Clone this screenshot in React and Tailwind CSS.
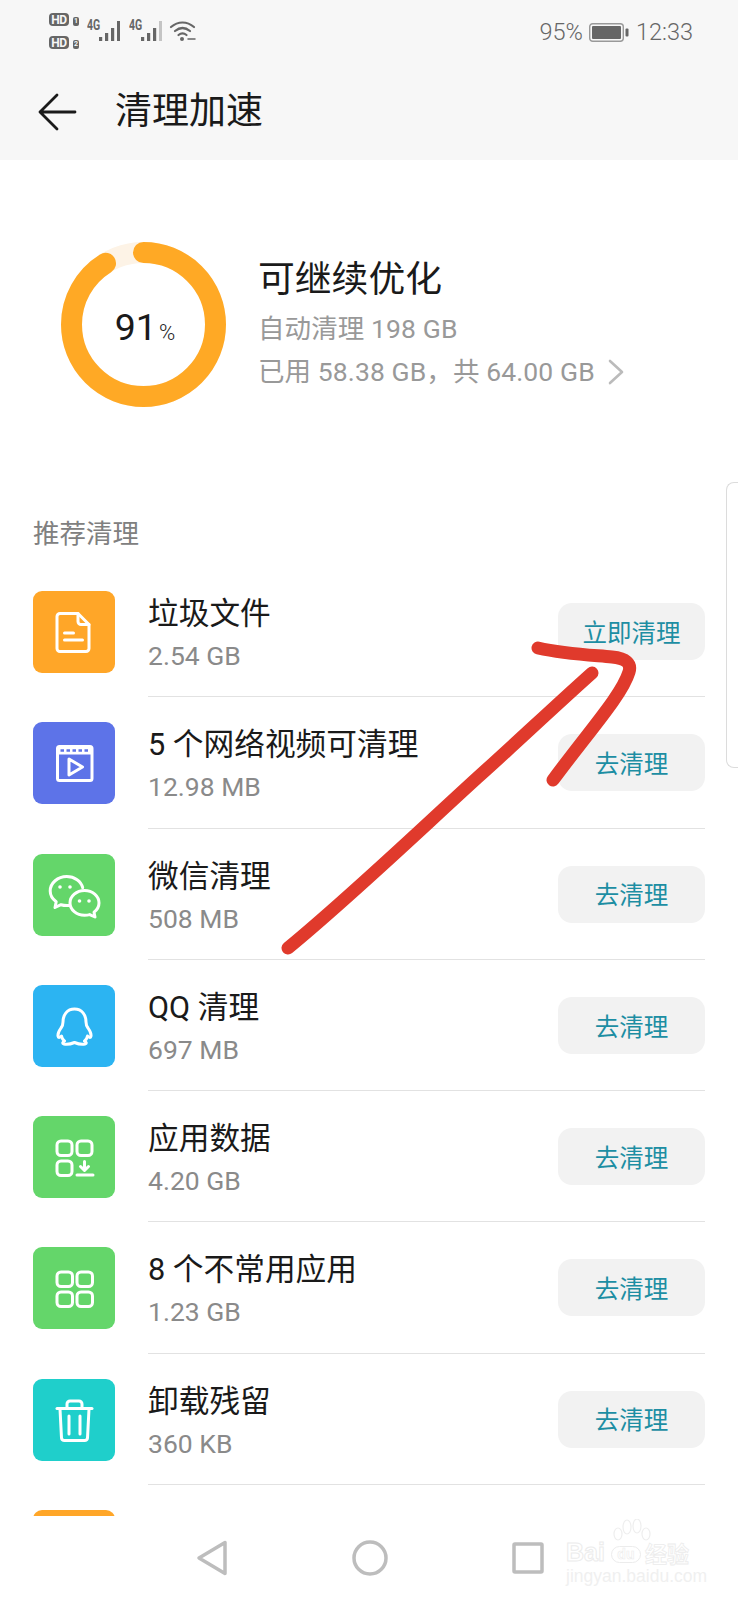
const rows = [
  { title: "垃圾文件", size: "2.54 GB", color: "bg-[#ffa628]", icon: "file", action: "立即清理" },
  { title: "5 个网络视频可清理", size: "12.98 MB", color: "bg-[#5d73e8]", icon: "video" },
  { title: "微信清理", size: "508 MB", color: "bg-[#64d66a]", icon: "wechat" },
  { title: "QQ 清理", size: "697 MB", color: "bg-[#2cb4f2]", icon: "qq" },
  { title: "应用数据", size: "4.20 GB", color: "bg-[#64d66a]", icon: "appdata" },
  { title: "8 个不常用应用", size: "1.23 GB", color: "bg-[#64d66a]", icon: "apps" },
  { title: "卸载残留", size: "360 KB", color: "bg-[#1fcfcb]", icon: "trash" },
];

function TileIcon({ name }) {
  const common = {
    width: 82,
    height: 82,
    viewBox: "0 0 82 82",
    fill: "none",
    stroke: "#fff",
    strokeWidth: 3,
    strokeLinecap: "round",
    strokeLinejoin: "round",
  };
  if (name === "file") {
    return (
      <svg {...common}>
        <path d="M27 22.500h18l11 11v24a3 3 0 0 1-3 3H27a3 3 0 0 1-3-3v-32a3 3 0 0 1 3-3z" />
        <path d="M45 22.500v8a3 3 0 0 0 3 3h8" />
        <path d="M31.500 42h9M31.500 49h18" />
      </svg>
    );
  }
  if (name === "video") {
    return (
      <svg {...common}>
        <rect x="24.500" y="24.500" width="34.500" height="34" rx="2" />
        <path d="M24.500 29h34.500" strokeWidth="7" strokeLinecap="butt" />
        <path d="M27.500 28.500h29" stroke="#5d73e8" strokeWidth="2.400" strokeDasharray="3.500 2.500" strokeLinecap="butt" />
        <path d="M36 37l13.500 8L36 53z" />
      </svg>
    );
  }
  if (name === "wechat") {
    return (
      <svg {...common}>
        <path d="M36 51.500c-3 .2-5.500 0-8-.8l-6 2.800 1.200-5.800c-3.800-2.700-6-6.600-6-10.700 0-8 7.600-14.500 16.500-14.500 7.800 0 14.500 4.700 16 11.200" />
        <path d="M51.500 36.500c8 0 14.500 5.600 14.500 12.500 0 3.700-1.900 6.900-5 9.200l1 4.800-5.300-2.400c-1.600.5-3.400.7-5.200.7-8 0-14.500-5.600-14.500-12.300s6.500-12.500 14.500-12.500z" />
        <circle cx="27" cy="33" r="1.800" fill="#fff" stroke="none" />
        <circle cx="37" cy="33" r="1.800" fill="#fff" stroke="none" />
        <circle cx="46.500" cy="47" r="1.800" fill="#fff" stroke="none" />
        <circle cx="56" cy="47" r="1.800" fill="#fff" stroke="none" />
      </svg>
    );
  }
  if (name === "qq") {
    return (
      <svg {...common}>
        <path d="M41.500 24c-7.500 0-11.500 6-11.500 13 0 2.500-.5 4-2 6-2 2.800-3.300 5.500-3 8 .2 1.700 1.500 2 3.500 0 .5 2.500 1.500 4 3 5-2 1-2.500 2.600-.5 3.100 3.200.7 7-.1 10.500-1.600 3.500 1.500 7.300 2.300 10.500 1.600 2-.5 1.500-2.100-.5-3.100 1.500-1 2.500-2.500 3-5 2 2 3.300 1.700 3.500 0 .3-2.500-1-5.200-3-8-1.500-2-2-3.500-2-6 0-7-4-13-11.500-13z" />
      </svg>
    );
  }
  if (name === "appdata") {
    return (
      <svg {...common}>
        <rect x="24" y="25" width="15" height="14.500" rx="4" />
        <rect x="44" y="25" width="15" height="14.500" rx="4" />
        <rect x="24" y="45" width="15" height="14.500" rx="4" />
        <path d="M51.500 45.500v8M47.500 50.500l4 4 4-4" />
        <path d="M44 59h16" />
      </svg>
    );
  }
  if (name === "apps") {
    return (
      <svg {...common}>
        <rect x="24" y="25" width="15.500" height="14.500" rx="4" />
        <rect x="44" y="25" width="15.500" height="14.500" rx="4" />
        <rect x="24" y="45" width="15.500" height="14.500" rx="4" />
        <rect x="44" y="45" width="15.500" height="14.500" rx="4" />
      </svg>
    );
  }
  return (
    <svg {...common}>
      <path d="M24 29.500h35" />
      <path d="M34 29v-4a3 3 0 0 1 3-3h9a3 3 0 0 1 3 3v4" />
      <path d="M27 30l1.500 29a3 3 0 0 0 3 2.500h20a3 3 0 0 0 3-2.500L56 30" />
      <path d="M36 37v18M47 37v18" />
    </svg>
  );
}

function Bars({ dim }) {
  const heights = [4, 8, 13, 20];
  return (
    <svg width="22" height="21" viewBox="0 0 22 21">
      {heights.map((h, i) => (
        <rect
          key={i}
          x={i * 6 + 1}
          y={21 - h}
          width="3.200"
          height={h}
          fill={dim && i === 3 ? "#c4c4c4" : "#666"}
        />
      ))}
    </svg>
  );
}

function HdBadge({ n }) {
  return (
    <div className="flex items-end gap-[4px]">
      <span className="flex h-[13px] w-[20px] items-center justify-center rounded-[4px] bg-[#666] text-[12px] leading-none font-bold tracking-[-0.500px] text-[#f7f7f7]">
        HD
      </span>
      <span className="flex h-[9px] w-[6px] items-center justify-center rounded-[2px] bg-[#666] text-[7px] leading-none font-bold text-[#f7f7f7]">
        {n}
      </span>
    </div>
  );
}

function StatusBar() {
  return (
    <div className="flex h-[64px] items-start justify-between pr-[45px] pl-[49px]">
      <div className="flex pt-[13px]">
        <div className="flex w-[38px] flex-col gap-[10px]">
          <HdBadge n="1" />
          <HdBadge n="2" />
        </div>
        {[false, true].map((dim, i) => (
          <div key={i} className="mt-[7px] flex w-[42px] items-start">
            <span className="w-[11px] origin-left scale-x-75 text-[14px] leading-[11px] font-bold whitespace-nowrap text-[#666]">4G</span>
            <Bars dim={dim} />
          </div>
        ))}
        <svg className="mt-[7px] -ml-[2px]" width="27" height="22" viewBox="0 0 27 22" fill="none" stroke="#666" strokeWidth="2.200" strokeLinecap="round">
          <path d="M2 7c7-6 16-6 23 0" />
          <path d="M6 11c5-4 10-4 15 0" />
          <path d="M9.500 15c3-2.500 5-2.500 8 0" />
          <circle cx="13" cy="19" r="2" fill="#666" stroke="none" />
          <path d="M19 19h7" strokeWidth="1.500" />
        </svg>
      </div>
      <div className="flex items-center pt-[18px] text-[23.500px] leading-[28px] font-light text-[#666]">
        <span>95%</span>
        <svg className="mr-[7px] ml-[6px]" width="40" height="19" viewBox="0 0 40 19">
          <rect x="0.700" y="0.700" width="33.600" height="17.600" rx="3" fill="none" stroke="#999" strokeWidth="1.400" />
          <rect x="3" y="3" width="29" height="13" rx="1" fill="#666" />
          <rect x="36.500" y="5.500" width="3" height="8" rx="1" fill="#666" />
        </svg>
        <span>12:33</span>
      </div>
    </div>
  );
}

function Ring() {
  return (
    <div className="relative h-[165px] w-[165px] shrink-0">
      <svg width="165" height="165" viewBox="0 0 165 165" fill="none" strokeWidth="21">
        <circle cx="82.500" cy="82.500" r="72" stroke="#fdf3e6" />
        <circle
          cx="82.500"
          cy="82.500"
          r="72"
          stroke="#ffa925"
          strokeLinecap="round"
          strokeDasharray="411.700 452.400"
          transform="rotate(-90 82.500 82.500)"
        />
      </svg>
      <div className="absolute inset-0 flex items-baseline justify-center pt-[60px] pl-[3px] text-[#1a1a1a]">
        <span className="text-[37.500px] leading-[50px]">91</span>
        <span className="ml-[2px] text-[22px] leading-[50px] font-light text-[#222]">%</span>
      </div>
    </div>
  );
}

function CleanRow({ row }) {
  return (
    <div className="flex h-[131.300px] shrink-0 px-[33px]">
      <div className={`mt-[25px] h-[82px] w-[82px] shrink-0 rounded-[9px] ${row.color}`}>
        <TileIcon name={row.icon} />
      </div>
      <div className="ml-[33px] flex flex-1 justify-between border-b border-[#e2e2e2]">
        <div className="pt-[30px]">
          <div className="text-[30.700px] leading-[36px] text-[#1a1a1a]">{row.title}</div>
          <div className="mt-[9px] text-[26.500px] leading-[30px] text-[#8a8a8a]">{row.size}</div>
        </div>
        <button
          type="button"
          className="mt-[37px] h-[57px] w-[147px] rounded-[14px] bg-[#f2f2f2] pt-[5px] text-[24.500px] text-[#1d8ea3]"
        >
          {row.action || "去清理"}
        </button>
      </div>
    </div>
  );
}

export default function App() {
  return (
    <div className="relative flex h-[1600px] w-[738px] flex-col overflow-hidden bg-white font-['Roboto','Noto_Sans_CJK_SC',sans-serif]">
      <header className="h-[160px] shrink-0 bg-[#f7f7f7]">
        <StatusBar />
        <div className="flex items-center pt-[24px] pl-[38px]">
          <svg width="39" height="38" viewBox="0 0 39 38" fill="none" stroke="#1a1a1a" strokeWidth="2.800" strokeLinecap="round" strokeLinejoin="round">
            <path d="M37 19H2M19 2L2 19l17 17" />
          </svg>
          <h1 className="ml-[38px] text-[37px] leading-[48px] font-normal text-[#1a1a1a]">清理加速</h1>
        </div>
      </header>

      <section className="flex h-[336px] shrink-0 pt-[82px] pl-[61px]">
        <Ring />
        <div className="ml-[32px] pt-[16px]">
          <div className="text-[36.800px] leading-[44px] text-[#1a1a1a]">可继续优化</div>
          <div className="mt-[11px] text-[26.500px] leading-[32px] tracking-[0.100px] text-[#999]">自动清理 198 GB</div>
          <div className="mt-[11px] flex items-center text-[26.500px] leading-[32px] tracking-[0.100px] text-[#999]">
            <span>已用 58.38 GB，共 64.00 GB</span>
            <svg className="ml-[13px]" width="16" height="26" viewBox="0 0 16 26" fill="none" stroke="#bbb" strokeWidth="2.600" strokeLinecap="round" strokeLinejoin="round">
              <path d="M2 2l12 11L2 24" />
            </svg>
          </div>
        </div>
      </section>

      <div className="h-[70px] shrink-0 pt-[21px] pl-[33px] text-[26.500px] leading-[34px] text-[#808080]">推荐清理</div>

      <div className="h-[950px] shrink-0 overflow-hidden">
        {rows.map((row) => (
          <CleanRow key={row.title} row={row} />
        ))}
        <div className="px-[33px] pt-[25px]">
          <div className="h-[82px] w-[82px] rounded-[9px] bg-[#ffa628]" />
        </div>
      </div>

      <nav className="flex flex-1 items-center gap-[124px] pl-[196px]">
        <svg width="32" height="36" viewBox="0 0 32 36" fill="none" stroke="#bdbdbd" strokeWidth="3.500" strokeLinejoin="round">
          <path d="M29 2.500v31L3 18z" />
        </svg>
        <svg width="36" height="36" viewBox="0 0 36 36" fill="none" stroke="#bdbdbd" strokeWidth="3.500">
          <circle cx="18" cy="18" r="16" />
        </svg>
        <svg width="32" height="32" viewBox="0 0 32 32" fill="none" stroke="#bdbdbd" strokeWidth="3.500" strokeLinejoin="round">
          <rect x="2" y="2" width="28" height="28" rx="1" />
        </svg>
      </nav>

      {/* side handle */}
      <div className="absolute top-[482px] right-0 h-[286px] w-[12px] rounded-l-[8px] border-y border-l border-[#dcdcdc]" />

      {/* hand drawn arrow over the list */}
      <svg className="pointer-events-none absolute top-0 left-0" width="738" height="1600" fill="none" stroke="#e03a2c" strokeWidth="13" strokeLinecap="round" strokeLinejoin="round">
        <path d="M288 948C350 897 420 830 477 778C515 744 555 706 592 673" />
        <path d="M538 648C565 654 590 655 612 657Q633 659 629 672C622 695 590 730 553 780" />
      </svg>

      {/* baidu watermark */}
      <div className="absolute top-[1519px] left-[566px] w-[134px] font-['Liberation_Sans',sans-serif]">
        <svg className="absolute top-0 left-[46px]" width="40" height="26" viewBox="0 0 40 26" fill="#fff" stroke="#eeeeee" strokeWidth="1.200">
          <ellipse cx="6" cy="15" rx="4" ry="6" />
          <ellipse cx="15" cy="8" rx="4" ry="7" />
          <ellipse cx="25" cy="7" rx="4" ry="7" />
          <ellipse cx="34" cy="15" rx="4" ry="6" />
        </svg>
        <div className="flex items-center pt-[22px] text-[25px] leading-[22px] font-bold text-white [-webkit-text-stroke:1px_#ececec]">
          <span>Bai</span>
          <span className="mt-[4px] ml-[6px] flex h-[17px] w-[30px] items-center justify-center rounded-full border border-[#ececec] text-[14px] [-webkit-text-stroke:0.600px_#ececec]">du</span>
          <span className="ml-[4px] font-['Noto_Sans_CJK_SC',sans-serif] text-[22px] [-webkit-text-stroke:0.800px_#ececec]">经验</span>
        </div>
        <div className="mt-[4px] text-[17.500px] leading-[18px] whitespace-nowrap text-[#f0f0f0]">jingyan.baidu.com</div>
      </div>
    </div>
  );
}
